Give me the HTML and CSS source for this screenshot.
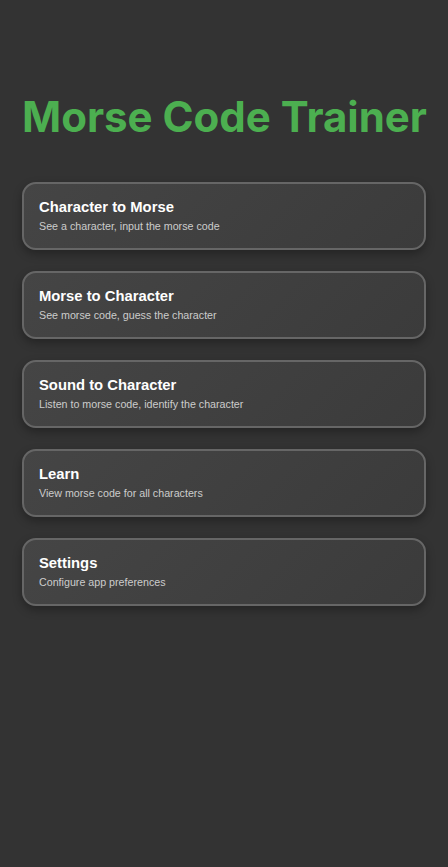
FILE: index.html
```html
<!DOCTYPE html>
<html>
<head>
<meta charset="utf-8">
<link rel="stylesheet" href="styles.css">
</head>
<body>
<div class="app">
  <h1 class="title">Morse Code Trainer</h1>
  <div class="menu">
    <div class="card">
      <div class="card-title">Character to Morse</div>
      <div class="card-desc">See a character, input the morse code</div>
    </div>
    <div class="card">
      <div class="card-title">Morse to Character</div>
      <div class="card-desc">See morse code, guess the character</div>
    </div>
    <div class="card">
      <div class="card-title">Sound to Character</div>
      <div class="card-desc">Listen to morse code, identify the character</div>
    </div>
    <div class="card">
      <div class="card-title">Learn</div>
      <div class="card-desc">View morse code for all characters</div>
    </div>
    <div class="card">
      <div class="card-title">Settings</div>
      <div class="card-desc">Configure app preferences</div>
    </div>
  </div>
</div>
</body>
</html>
```
FILE: styles.css
```css
html, body {
  margin: 0;
  padding: 0;
  background: #333333;
  height: 100%;
}
.app {
  padding: 91px 22px 0;
  font-family: "Liberation Sans", Arial, sans-serif;
}
.title {
  margin: 0 0 40px;
  font-family: Inter, "Liberation Sans", sans-serif;
  font-weight: 700;
  font-size: 42px;
  line-height: 51px;
  color: #4caf50;
  text-align: center;
  white-space: nowrap;
}
.menu {
  display: flex;
  flex-direction: column;
  gap: 21px;
}
.card {
  height: 68px;
  box-sizing: border-box;
  border: 2px solid #666666;
  border-radius: 14px;
  background: linear-gradient(135deg, #454545 0%, #3b3b3b 100%);
  box-shadow: 0 4px 10px rgba(0, 0, 0, 0.3);
  padding: 14px 15px 0;
  display: flex;
  flex-direction: column;
}
.card-title {
  font-size: 14.8px;
  font-weight: 700;
  line-height: 18px;
  color: #ffffff;
}
.card-desc {
  margin-top: 4px;
  font-size: 10.7px;
  line-height: 13px;
  color: #cccccc;
}
```
